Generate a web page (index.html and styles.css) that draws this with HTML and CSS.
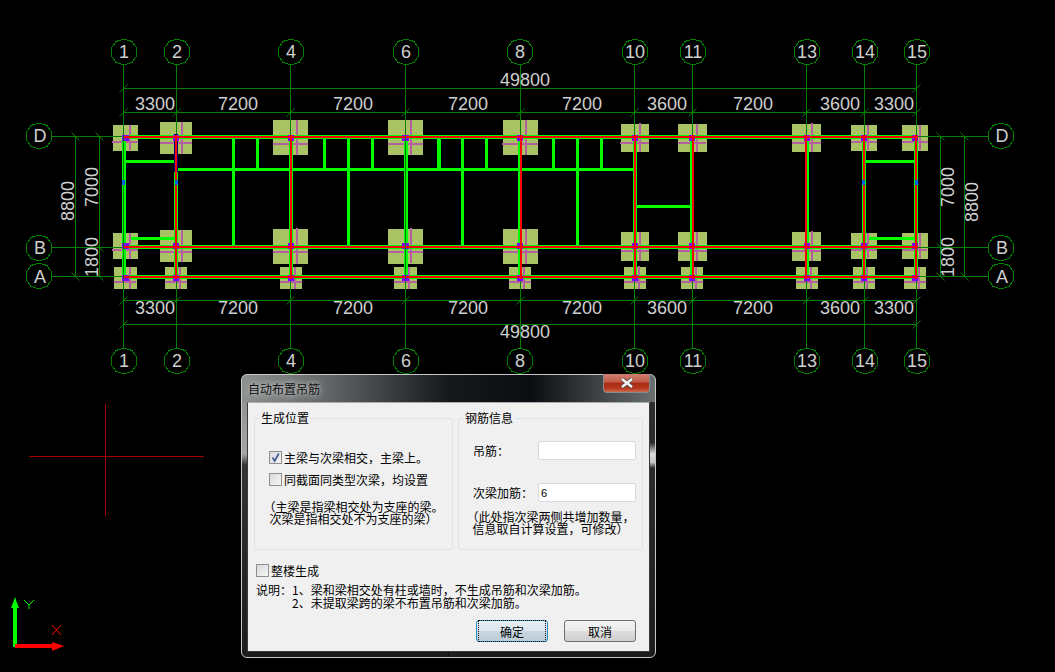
FILE: index.html
```html
<!DOCTYPE html>
<html lang="zh-CN">
<head>
<meta charset="utf-8">
<title>自动布置吊筋</title>
<link rel="stylesheet" href="styles.css">
</head>
<body>
<main class="desktop">
<svg class="cad" width="1055" height="672" viewBox="0 0 1055 672" aria-label="CAD plan">
  <defs>
    <marker id="tickup" markerUnits="userSpaceOnUse" markerWidth="12" markerHeight="12" refX="6" refY="6" overflow="visible"><path class="axis" d="M2 10L10 2"/></marker>
    <marker id="tickdown" markerUnits="userSpaceOnUse" markerWidth="12" markerHeight="12" refX="6" refY="6" overflow="visible"><path class="axis" d="M2 2L10 10"/></marker>
    <polygon id="bubble" class="bubble" points="0,-13 8,-10.5 12.5,-4 12.5,4 8,10.5 0,13 -8,10.5 -12.5,4 -12.5,-4 -8,-10.5"/>
  </defs>

  <g class="pads">
    <path d="M113 125h25v26h-25zM160 122h32v32h-32zM273 120h35v35h-35zM388 120h35v35h-35zM503 120h35v35h-35zM621 124h28v28h-28zM678 124h29v28h-29zM792 124h29v28h-29zM851 125h26v26h-26zM902 125h26v26h-26z"/>
    <path d="M113 233h25v26h-25zM160 230h32v32h-32zM273 229h35v35h-35zM388 229h35v35h-35zM503 229h35v35h-35zM621 232h28v29h-28zM678 232h29v29h-29zM792 232h29v29h-29zM851 233h26v26h-26zM902 233h26v26h-26z"/>
    <path d="M114 267h23v22h-23zM165 267h22v22h-22zM280 267h22v22h-22zM394 267h23v22h-23zM509 267h22v22h-22zM624 267h22v22h-22zM681 267h22v22h-22zM796 267h22v22h-22zM853 267h22v22h-22zM904 267h22v22h-22z"/>
  </g>
  <path class="rebar" d="M130 125v25M112 142h26M182 122v32M160 143h32M297 120v35M273 144h35M411 120v35M388 144h35M526 120v35M502 144h36M640 123v29M620 143h29M697 124v28M678 143h28M812 123v29M792 143h29M868 125v25M851 142h26M920 125v25M902 142h26"/>
  <path class="rebar" d="M130 233v26M112 250h26M182 230v32M160 252h32M297 228v36M273 252h35M411 228v35M388 252h35M526 229v35M503 252h35M640 232v29M621 251h28M697 232v29M678 251h29M812 231v30M792 251h29M868 233v25M851 250h26M920 233v25M902 250h25"/>
  <path class="rebar" d="M130 267v22M114 282h22M180 267v22M165 282h22M295 267v22M280 282h22M409 267v22M394 282h23M524 267v22M509 282h22M639 266v23M624 282h22M696 267v22M681 282h22M811 267v22M796 282h22M867 267v22M853 282h22M919 267v22M904 282h22"/>

  <g class="axis">
    <path d="M123.5 65V348M176.5 65V348M290.5 65V348M405.5 65V348M520.5 65V348M634.5 65V348M692.5 65V348M806.5 65V348M864.5 65V348M916.5 65V348"/>
    <path d="M52 136.5H988M52 247.5H988M52 276.5H988"/>
    <polyline points="123.5,88.5 916.5,88.5" marker-start="url(#tickup)" marker-end="url(#tickup)"/>
    <polyline points="123.5,112.5 176.5,112.5 290.5,112.5 405.5,112.5 520.5,112.5 634.5,112.5 692.5,112.5 806.5,112.5 864.5,112.5 916.5,112.5" marker-start="url(#tickup)" marker-mid="url(#tickup)" marker-end="url(#tickup)"/>
    <polyline points="123.5,300.5 176.5,300.5 290.5,300.5 405.5,300.5 520.5,300.5 634.5,300.5 692.5,300.5 806.5,300.5 864.5,300.5 916.5,300.5" marker-start="url(#tickup)" marker-mid="url(#tickup)" marker-end="url(#tickup)"/>
    <polyline points="123.5,324.5 916.5,324.5" marker-start="url(#tickup)" marker-end="url(#tickup)"/>
    <polyline points="75.5,136.5 75.5,276.5" marker-start="url(#tickdown)" marker-end="url(#tickdown)"/>
    <polyline points="99.5,136.5 99.5,247.5 99.5,276.5" marker-start="url(#tickdown)" marker-mid="url(#tickdown)" marker-end="url(#tickdown)"/>
    <polyline points="940.5,136.5 940.5,247.5 940.5,276.5" marker-start="url(#tickdown)" marker-mid="url(#tickdown)" marker-end="url(#tickdown)"/>
    <polyline points="964.5,136.5 964.5,276.5" marker-start="url(#tickdown)" marker-end="url(#tickdown)"/>
  </g>

  <path class="beam" d="M232 139h3v106h-3zM347 139h3v106h-3zM461 139h3v106h-3zM576 139h3v106h-3zM256 139h3v29h-3zM323 139h3v29h-3zM371 139h3v29h-3zM437 139h4v29h-4zM485 139h3v29h-3zM552 139h3v29h-3zM600 139h3v29h-3zM178 168h455v3h-455zM126 160h48v3h-48zM866 160h48v3h-48zM131 237h43v3h-43zM869 237h45v3h-45zM637 205h53v3h-53z"/>
  <path class="beam" d="M122 135h4v144h-4zM174 172h4v107h-4zM174 135h4v4h-4zM289 135h4v144h-4zM404 135h4v144h-4zM518 135h4v144h-4zM633 135h4v144h-4zM690 135h4v144h-4zM806 135h3v144h-3zM862 135h4v144h-4zM914 135h4v144h-4z"/>
  <path class="beam" d="M123 135h795v4h-795zM123 245h795v4h-795zM123 275h795v4h-795z"/>

  <rect class="navy" x="174" y="134" width="4" height="38"/>
  <path class="tick-magenta" d="M175 143h2M175 147h2M175 151h2M175 155h2M175 159h2M175 163h2M175 167h2"/>

  <path class="column" d="M122 135h7v6h-7zM173 135h6v6h-6zM288 135h6v6h-6zM402 135h7v6h-7zM517 135h6v6h-6zM632 135h6v6h-6zM689 135h6v6h-6zM804 135h6v6h-6zM861 135h6v6h-6zM912 135h6v6h-6z"/>
  <path class="column" d="M122 243h7v6h-7zM173 243h6v6h-6zM288 243h6v6h-6zM402 243h7v6h-7zM517 243h6v6h-6zM632 243h6v6h-6zM689 243h6v6h-6zM804 243h6v6h-6zM861 243h6v6h-6zM912 243h6v6h-6z"/>
  <path class="column" d="M122 275h7v6h-7zM173 275h6v6h-6zM288 275h6v6h-6zM402 275h7v6h-7zM517 275h6v6h-6zM632 275h6v6h-6zM689 275h6v6h-6zM804 275h6v6h-6zM861 275h6v6h-6zM912 275h6v6h-6z"/>

  <path class="red" d="M124 136h794v2h-794zM124 246h794v2h-794zM124 276h794v2h-794z"/>
  <path class="red" d="M175 135h2v144h-2zM290 135h2v144h-2zM520 135h2v144h-2zM634 135h2v144h-2zM692 135h2v144h-2zM805 135h2v144h-2zM863 135h2v144h-2zM915 135h2v144h-2z"/>
  <path class="axis" d="M123.5 136V279M405.5 136V279"/>
  <path class="blue" d="M122 180h3v5h-3zM175 180h3v5h-3zM862 180h3v5h-3zM915 180h3v5h-3z"/>

  <g>
    <use href="#bubble" x="124" y="52"/><use href="#bubble" x="177" y="52"/><use href="#bubble" x="291" y="52"/><use href="#bubble" x="406" y="52"/><use href="#bubble" x="520" y="52"/><use href="#bubble" x="635" y="52"/><use href="#bubble" x="693" y="52"/><use href="#bubble" x="807" y="52"/><use href="#bubble" x="865" y="52"/><use href="#bubble" x="917" y="52"/>
    <use href="#bubble" x="124" y="361"/><use href="#bubble" x="177" y="361"/><use href="#bubble" x="291" y="361"/><use href="#bubble" x="406" y="361"/><use href="#bubble" x="520" y="361"/><use href="#bubble" x="635" y="361"/><use href="#bubble" x="693" y="361"/><use href="#bubble" x="807" y="361"/><use href="#bubble" x="865" y="361"/><use href="#bubble" x="917" y="361"/>
    <use href="#bubble" x="39" y="136"/><use href="#bubble" x="39" y="248"/><use href="#bubble" x="39" y="276"/>
    <use href="#bubble" x="1001" y="136"/><use href="#bubble" x="1001" y="248"/><use href="#bubble" x="1001" y="276"/>
  </g>

  <g class="label">
    <text x="124" y="58">1</text><text x="177" y="58">2</text><text x="291" y="58">4</text><text x="406" y="58">6</text><text x="520" y="58">8</text><text x="635" y="58">10</text><text x="693" y="58">11</text><text x="807" y="58">13</text><text x="865" y="58">14</text><text x="917" y="58">15</text>
    <text x="124" y="367">1</text><text x="177" y="367">2</text><text x="291" y="367">4</text><text x="406" y="367">6</text><text x="520" y="367">8</text><text x="635" y="367">10</text><text x="693" y="367">11</text><text x="807" y="367">13</text><text x="865" y="367">14</text><text x="917" y="367">15</text>
    <text x="40" y="142">D</text><text x="40" y="254">B</text><text x="40" y="283">A</text>
    <text x="1002" y="142">D</text><text x="1002" y="254">B</text><text x="1002" y="283">A</text>

    <text x="525" y="86">49800</text>
    <text x="155" y="110">3300</text><text x="238" y="110">7200</text><text x="353" y="110">7200</text><text x="468" y="110">7200</text><text x="582" y="110">7200</text><text x="667" y="110">3600</text><text x="753" y="110">7200</text><text x="840" y="110">3600</text><text x="894" y="110">3300</text>
    <text x="155" y="314">3300</text><text x="238" y="314">7200</text><text x="353" y="314">7200</text><text x="468" y="314">7200</text><text x="582" y="314">7200</text><text x="667" y="314">3600</text><text x="753" y="314">7200</text><text x="840" y="314">3600</text><text x="894" y="314">3300</text>
    <text x="525" y="338">49800</text>

    <text transform="translate(74 201) rotate(-90)">8800</text>
    <text transform="translate(98 187) rotate(-90)">7000</text>
    <text transform="translate(98 257) rotate(-90)">1800</text>
    <text transform="translate(954 187) rotate(-90)">7000</text>
    <text transform="translate(978 202) rotate(-90)">8800</text>
    <text transform="translate(954 257) rotate(-90)">1800</text>
  </g>

  <path class="cross" d="M29 456.5H204M105.5 404V516"/>

  <path class="ucs-y" d="M13 606h4v41h-4zM15 597l2 6 2 5h-8l2-5z"/>
  <path class="ucs-y-label" d="M24 600l5 5M34 600l-5 5M29 605v4"/>
  <path class="ucs-x" d="M15 644h37v-2l12 4-12 5v-3H15z"/>
  <path class="ucs-x-label" d="M52 625l9 10M61 625l-9 10"/>
</svg>

<section class="dialog">
  <header class="titlebar">
    <h1 class="title">自动布置吊筋</h1>
    <button class="close" type="button" aria-label="关闭">
      <svg width="14" height="10" viewBox="0 0 14 10"><path class="close-outline" d="M2 1l10 8M12 1L2 9"/><path class="close-x" d="M2 1l10 8M12 1L2 9"/></svg>
    </button>
  </header>
  <div class="client">
    <div class="groups">
      <fieldset class="group group-left">
        <legend>生成位置</legend>
        <div class="check-row first">
          <span class="checkbox"><svg width="11" height="11" viewBox="0 0 11 11"><path class="check" d="M2.5 5.5l2.2 3.5L8.8 1.5"/></svg></span>
          <span>主梁与次梁相交，主梁上。</span>
        </div>
        <div class="check-row second">
          <span class="checkbox"></span>
          <span>同截面同类型次梁，均设置</span>
        </div>
        <p class="note note-left">（主梁是指梁相交处为支座的梁。<br>次梁是指相交处不为支座的梁）</p>
      </fieldset>
      <fieldset class="group group-right">
        <legend>钢筋信息</legend>
        <div class="field-row">
          <label class="field-label" for="f1">吊筋：</label>
          <input class="field" id="f1" type="text" value="">
        </div>
        <div class="field-row field-row-two">
          <label class="field-label" for="f2">次梁加筋：</label>
          <input class="field" id="f2" type="text" value="6">
        </div>
        <p class="note note-right">（此处指次梁两侧共增加数量，<br>信息取自计算设置，可修改）</p>
      </fieldset>
    </div>
    <div class="check-row whole">
      <span class="checkbox"></span>
      <span>整楼生成</span>
    </div>
    <div class="explain">
      <p class="explain-line">说明：1、梁和梁相交处有柱或墙时，不生成吊筋和次梁加筋。</p>
      <p class="explain-line indent">2、未提取梁跨的梁不布置吊筋和次梁加筋。</p>
    </div>
    <div class="actions">
      <button class="btn btn-default" type="button"><span class="btn-focus">确定</span></button>
      <button class="btn" type="button">取消</button>
    </div>
  </div>
</section>
</main>
</body>
</html>
```
FILE: styles.css
```css
html, body {
  margin: 0;
  padding: 0;
  background: #000;
  overflow: hidden;
}
.desktop {
  position: relative;
  width: 1055px;
  height: 672px;
  background: #000;
}
.cad { display: block; }

.axis { stroke: #007f00; stroke-width: 1; fill: none; }
.bubble { fill: #000; stroke: #007f00; stroke-width: 1; shape-rendering: crispEdges; }
.pads { fill: #a9c263; shape-rendering: crispEdges; }
.rebar { stroke: #b45fa0; stroke-width: 2; fill: none; shape-rendering: crispEdges; }
.beam { fill: #00ff00; shape-rendering: crispEdges; }
.navy { fill: #000080; shape-rendering: crispEdges; }
.tick-magenta { stroke: #ff00ff; stroke-width: 1; fill: none; shape-rendering: crispEdges; }
.column { fill: #7f00ff; shape-rendering: crispEdges; }
.red { fill: #ff0000; shape-rendering: crispEdges; }
.blue { fill: #0060e0; shape-rendering: crispEdges; }
.label {
  font-family: "Liberation Sans", Arial, sans-serif;
  font-size: 18px;
  fill: #cfcfcf;
  text-anchor: middle;
}
.cross { stroke: #a00000; stroke-width: 1; fill: none; shape-rendering: crispEdges; }
.ucs-y { fill: #00ff00; }
.ucs-y-label { stroke: #00ff00; stroke-width: 1; fill: none; }
.ucs-x { fill: #ff0000; }
.ucs-x-label { stroke: #ff0000; stroke-width: 1; fill: none; }

.dialog {
  position: absolute;
  left: 241px;
  top: 374px;
  width: 415px;
  height: 284px;
  box-sizing: border-box;
  display: flex;
  flex-direction: column;
  padding: 0 5px 5px;
  border: 1px solid #c8c8c8;
  border-radius: 6px;
  background:
    linear-gradient(90deg, #8d9090 0, #5e6263 22%, #15191c 50%, #0a0e12 70%, #6a6f70 100%) top / 100% 27px no-repeat,
    linear-gradient(#8a8a8a, #a5a5a5 28%, #333 32%, #1c1c1c) left / 50% 100% no-repeat,
    linear-gradient(#303030, #2a2a2a 24%, #e0e0e0 28%, #c0c0c0 31%, #2a2a2a 33%, #1c1c1c) right / 50% 100% no-repeat;
  font-family: "Noto Sans CJK SC", "Noto Sans", sans-serif;
  font-size: 12px;
  line-height: 12px;
  color: #000;
}
.titlebar {
  flex: 0 0 27px;
  display: flex;
  justify-content: space-between;
  align-items: flex-start;
}
.title {
  margin: 7px 0 0 1px;
  font-size: 12px;
  line-height: 13px;
  font-weight: 400;
  color: #101010;
  text-shadow: 0 0 5px #c8c8c8, 0 0 9px #c8c8c8;
}
.close {
  width: 47px;
  height: 19px;
  padding: 0;
  margin: -1px 0 0;
  display: flex;
  align-items: center;
  justify-content: center;
  box-sizing: border-box;
  border: 1px solid #8a8a8a;
  border-top: 0;
  border-radius: 0 0 4px 4px;
  background: linear-gradient(#cf7f72, #c25a48 45%, #a92a12 50%, #b53a1f 80%, #cf6a50);
}
.close-outline { stroke: #4a4a4a; stroke-width: 4; fill: none; }
.close-x { stroke: #f4f4f4; stroke-width: 2.4; fill: none; }

.client {
  flex: 1;
  min-height: 0;
  box-sizing: border-box;
  display: flex;
  flex-direction: column;
  padding: 8px 6px 0;
  background: #f0f0f0;
  border: 1px solid #3c3c3c;
  border-top-color: #a8acae;
}
.groups {
  display: grid;
  grid-template-columns: 199px 185px;
  column-gap: 5px;
}
.group {
  margin: 0;
  min-width: 0;
  height: 139px;
  box-sizing: border-box;
  padding: 0;
  border: 1px solid #dce3ea;
  border-radius: 3px;
}
.group legend {
  margin-left: 4px;
  padding: 0 2px;
  font-size: 12px;
  line-height: 14px;
}
.check-row {
  display: flex;
  align-items: center;
  gap: 2px;
  height: 13px;
  line-height: 13px;
}
.first { margin: 26px 0 0 14px; }
.second { margin: 9px 0 0 14px; }
.whole { margin: 14px 0 0 2px; }
.whole span:last-child { margin-top: -1px; }
.checkbox {
  flex: 0 0 13px;
  width: 13px;
  height: 13px;
  box-sizing: border-box;
  display: flex;
  align-items: center;
  justify-content: center;
  border: 1px solid #8e8f8f;
  background: linear-gradient(135deg, #d6d8da, #f6f6f6);
}
.check { stroke: #4a5f97; stroke-width: 1.8; fill: none; }
.note {
  margin: 0;
  text-align: center;
  line-height: 12px;
}
.note-left { margin-top: 15px; }
.note-right { margin-top: 9px; }
.field-row {
  display: flex;
  align-items: center;
  margin: 16px 0 0 14px;
}
.field-row-two { margin-top: 23px; }
.field-label { flex: 0 0 65px; }
.field {
  width: 98px;
  height: 19px;
  box-sizing: border-box;
  padding: 0 2px;
  border: 1px solid #d6dadf;
  border-radius: 2px;
  background: #fff;
  outline: 0;
  font-family: "Liberation Sans", Arial, sans-serif;
  font-size: 11px;
  color: #000;
}
.explain { margin: 6px 0 0 2px; }
.explain-line { margin: 0; line-height: 13px; white-space: nowrap; }
.indent { padding-left: 36px; }
.actions {
  display: flex;
  justify-content: flex-end;
  gap: 16px;
  margin: 11px 7px 0 0;
}
.btn {
  width: 72px;
  height: 22px;
  box-sizing: border-box;
  padding: 0;
  display: flex;
  align-items: center;
  justify-content: center;
  border: 1px solid #707070;
  border-radius: 3px;
  background: linear-gradient(#f3f3f3, #ebebeb 48%, #dcdcdc 52%, #cfcfcf);
  font-family: "Noto Sans CJK SC", "Noto Sans", sans-serif;
  font-size: 12px;
  color: #000;
}
.btn-default {
  border: 1px solid #2a8fc0;
  background: linear-gradient(#e6eff5, #dbe6ee 48%, #c8d6e0 52%, #bccdd9);
}
.btn-focus {
  width: 100%;
  height: 100%;
  margin: 1px;
  display: flex;
  align-items: center;
  justify-content: center;
  border: 1px dotted #111;
}
```
